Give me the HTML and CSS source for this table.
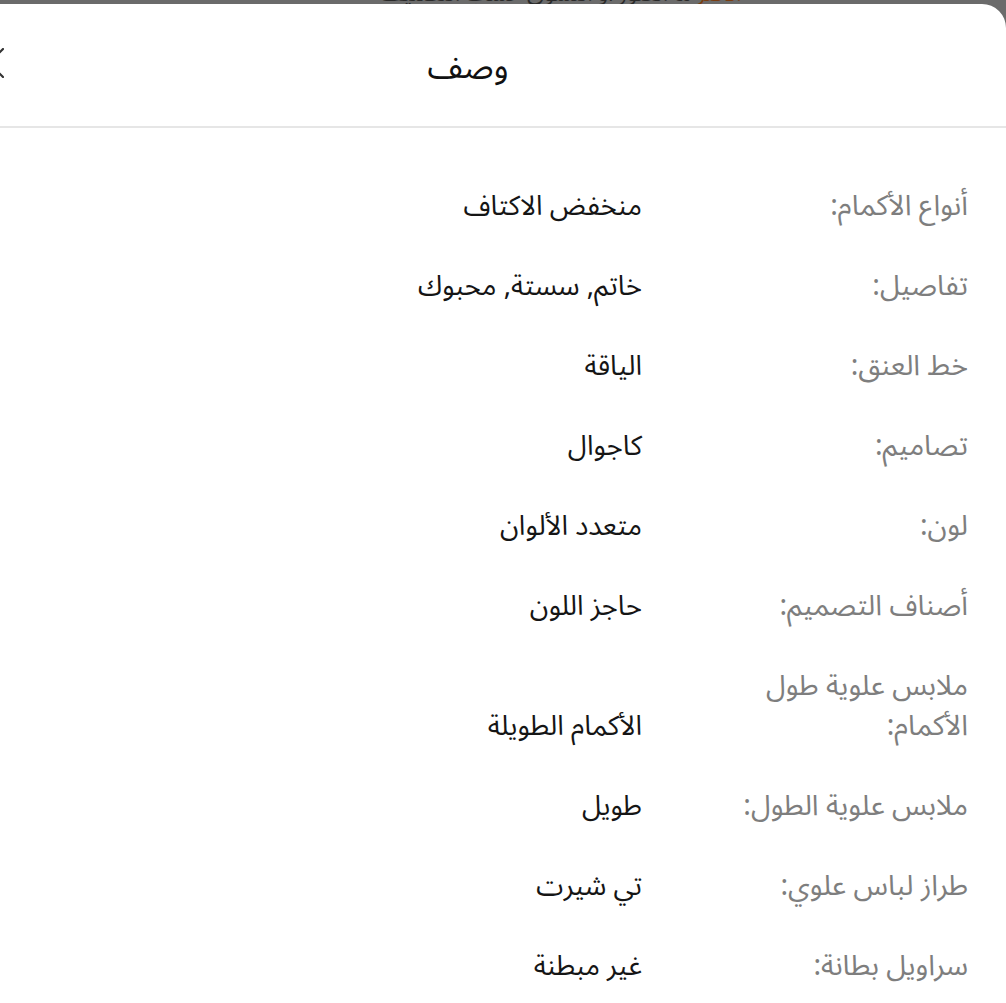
FILE: index.html
```html
<!DOCTYPE html>
<html lang="ar" dir="rtl">
<head>
<meta charset="utf-8">
<title>وصف</title>
<link rel="stylesheet" href="styles.css">
</head>
<body>
<div class="backdrop-strip"><span class="strip-text"><span class="orange">الأكثر</span> ما العثور أو التسوق حسب التصنيف</span></div>
<div class="sheet">
  <header class="sheet-header">
    <div class="spacer"></div>
    <h1 class="title">وصف</h1>
    <button class="close" aria-label="إغلاق">
      <svg width="30" height="30" viewBox="0 0 30 30"><path d="M1 1 L29 29 M29 1 L1 29" stroke="#333" stroke-width="2.2" fill="none" stroke-linecap="round"/></svg>
    </button>
  </header>
  <dl class="specs">
    <div class="row"><dt>أنواع الأكمام:</dt><dd>منخفض الاكتاف</dd></div>
    <div class="row"><dt>تفاصيل:</dt><dd>خاتم, سستة, محبوك</dd></div>
    <div class="row"><dt>خط العنق:</dt><dd>الياقة</dd></div>
    <div class="row"><dt>تصاميم:</dt><dd>كاجوال</dd></div>
    <div class="row"><dt>لون:</dt><dd>متعدد الألوان</dd></div>
    <div class="row"><dt>أصناف التصميم:</dt><dd>حاجز اللون</dd></div>
    <div class="row"><dt>ملابس علوية طول الأكمام:</dt><dd>الأكمام الطويلة</dd></div>
    <div class="row"><dt>ملابس علوية الطول:</dt><dd>طويل</dd></div>
    <div class="row"><dt>طراز لباس علوي:</dt><dd>تي شيرت</dd></div>
    <div class="row"><dt>سراويل بطانة:</dt><dd>غير مبطنة</dd></div>
  </dl>
</div>
</body>
</html>
```
FILE: styles.css
```css
html, body {
  margin: 0;
  padding: 0;
}
body {
  background: #6b6b6b;
  font-family: "Noto Sans Arabic", "Noto Naskh Arabic", "DejaVu Sans", sans-serif;
  overflow: hidden;
  height: 1003px;
}
.backdrop-strip {
  height: 4px;
  overflow: hidden;
  position: relative;
}
.strip-text {
  position: absolute;
  left: 380px;
  top: -18px;
  font-size: 22px;
  line-height: 24px;
  color: #2a2a2a;
  white-space: nowrap;
  direction: rtl;
}
.strip-text .orange { color: #7a3d10; }
.sheet {
  background: #fff;
  border-radius: 24px 24px 0 0;
  margin-left: -70px;
  min-height: 999px;
}
.sheet-header {
  display: flex;
  align-items: center;
  height: 122px;
  border-bottom: 2px solid #e6e6e6;
  padding-left: 44px;
}
.spacer { width: 74px; flex: none; }
.title {
  flex: 1;
  margin: 0;
  text-align: center;
  font-size: 33px;
  font-weight: 400;
  color: #111;
  padding-top: 4px;
}
.close {
  flex: none;
  width: 30px;
  height: 30px;
  padding: 0;
  border: 0;
  background: none;
  margin-bottom: 4px;
}
.close svg { display: block; }
.specs {
  margin: 0;
  padding: 38px 38px 0 0;
}
.row {
  display: grid;
  grid-template-columns: 266px 1fr;
  column-gap: 60px;
  align-items: end;
  padding: 20px 0;
}
.row dt {
  color: #7e7e7e;
  font-size: 28.5px;
  line-height: 40px;
}
.row dd {
  margin: 0;
  color: #151515;
  font-size: 27.5px;
  line-height: 40px;
}
```
